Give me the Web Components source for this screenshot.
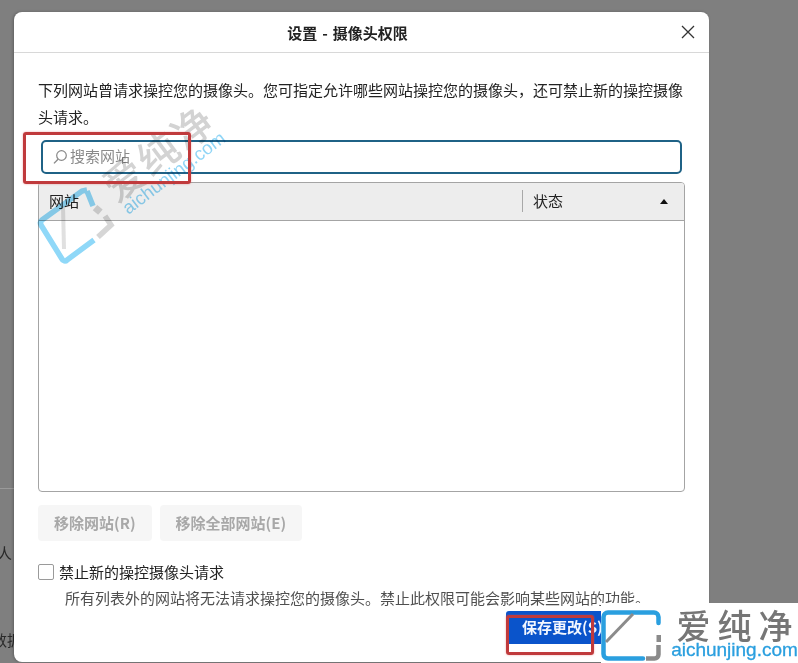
<!DOCTYPE html>
<html lang="zh-CN"><head><meta charset="utf-8"><title>设置 - 摄像头权限</title>
<style>
html,body{margin:0;padding:0}
body{width:798px;height:663px;overflow:hidden;background:#7f7f7f;font-family:"Noto Sans CJK SC","Noto Sans",sans-serif;font-size:15px;color:#222}
</style></head><body>
<x-page>
  <x-backdrop slot="side"></x-backdrop>
  <x-dialog heading="设置 - 摄像头权限">
    <x-intro>下列网站曾请求操控您的摄像头。您可指定允许哪些网站操控您的摄像头，还可禁止新的操控摄像头请求。</x-intro>
    <x-search>搜索网站</x-search>
    <x-table></x-table>
    <x-actions>
      <x-button>移除网站(R)</x-button>
      <x-button>移除全部网站(E)</x-button>
    </x-actions>
    <x-check note="所有列表外的网站将无法请求操控您的摄像头。禁止此权限可能会影响某些网站的功能。">禁止新的操控摄像头请求</x-check>
    <x-footer><x-button primary>保存更改(S)</x-button></x-footer>
  </x-dialog>
  <x-watermark slot="over"></x-watermark>
  <x-mark slot="over" style="left:23px;top:132px;width:168px;height:52px"></x-mark>
  <x-mark slot="over" style="left:506px;top:615px;width:88px;height:40px"></x-mark>
  <x-brand slot="over"></x-brand>
</x-page>
<script>
function def(name,css,html,init){
  customElements.define(name,class extends HTMLElement{
    constructor(){super();const r=this.attachShadow({mode:'open'});r.innerHTML='<style>'+css+'</style>'+html;}
    connectedCallback(){if(init)init(this,this.shadowRoot);}
  });
}
const logoPaths=`<path d="M57.5 13V7a4.5 4.5 0 0 0-4.5-4.5H7A4.5 4.5 0 0 0 2.500 7v37A4.500 4.500 0 0 0 7 48.500h35" fill="none" stroke="#2a9fdf" stroke-width="4.500" stroke-linecap="round"/>
<path d="M5 32 32 4" stroke="#8b8b8b" stroke-width="3" fill="none"/>
<rect x="55.500" y="25" width="4.500" height="7" fill="#8b8b8b"/>
<path d="M57.500 35v9.500a4 4 0 0 1-4 4H45" fill="none" stroke="#8b8b8b" stroke-width="4.500"/>`;
def('x-page',`:host{display:flex;position:relative;width:798px;height:663px;overflow:hidden}`,
  `<slot name="side"></slot><slot></slot><slot name="over"></slot>`);
def('x-backdrop',`:host{display:flex;flex-direction:column;flex:none;width:14px;overflow:hidden;color:#2a2a2a;font-size:15px;line-height:20px;box-sizing:border-box}
  .line{height:488px;flex:none;border-bottom:1px solid #9a9a9a}
  .ren{margin-top:54px;margin-left:-3px;white-space:nowrap}
  .data{margin-top:67px;margin-left:-8px;white-space:nowrap}`,
  `<div class="line"></div><div class="ren">人</div><div class="data">数据</div>`);
def('x-dialog',`:host{display:flex;flex-direction:column;flex:none;width:695px;height:650px;margin-top:12px;background:#fff;border-radius:8px;box-shadow:-1px 0 3px rgba(0,0,0,.25);box-sizing:border-box}
  header{display:flex;align-items:center;justify-content:center;height:40px;border-bottom:1px solid #d8d8d8;position:relative;font-weight:700;font-size:15px;color:#222;padding-right:28px}
  #t{word-spacing:1.500px}
  button{all:unset;position:absolute;right:14px;top:13px;width:14px;height:14px;display:flex}
  main{display:flex;flex-direction:column;padding:23px 24px 0}`,
  `<header><span id="t"></span><button aria-label="关闭"><svg width="14" height="14" viewBox="0 0 14 14"><path d="M1 1l12 12M13 1 1 13" stroke="#333" stroke-width="1.3" fill="none"/></svg></button></header><main><slot></slot></main>`,
  (h,r)=>{r.getElementById('t').textContent=h.getAttribute('heading')});
def('x-intro',`:host{display:block;line-height:27px;font-size:15px;color:#222}`,`<slot></slot>`);
def('x-search',`:host{display:flex;align-items:center;gap:2px;margin:10px 3px 0;height:34px;box-sizing:border-box;border:2px solid #1f6286;border-radius:5px;padding:0 0 3px 9px;color:#8a8a8a;font-size:15px}`,
  `<svg width="16" height="16" viewBox="0 0 16 16" style="margin-top:3px"><circle cx="9.500" cy="6.500" r="4.800" fill="none" stroke="#888" stroke-width="1.200"/><path d="M6 10.200 2 14.400" stroke="#888" stroke-width="1.300"/></svg><slot></slot>`);
def('x-table',`:host{display:block;margin-top:8px;height:310px;box-sizing:border-box;border:1px solid #a4a4a4;border-radius:4px;overflow:hidden}
  .head{display:grid;grid-template-columns:483px 1fr;height:38px;box-sizing:border-box;background:#ededed;border-bottom:1px solid #a4a4a4;align-items:center;font-size:15px;color:#222}
  .a{padding:0 0 3px 10px}
  .b{display:flex;align-items:center;justify-content:space-between;height:22px;border-left:1px solid #a8a8a8;padding:0 16px 0 10px;margin-top:-1px}
  .b span{padding-bottom:2px}
  .tri{width:0;height:0;border:4px solid transparent;border-top:0;border-bottom:5px solid #111}`,
  `<div class="head"><div class="a">网站</div><div class="b"><span>状态</span><i class="tri"></i></div></div>`);
def('x-actions',`:host{display:flex;gap:8px;margin-top:13px}`,`<slot></slot>`);
def('x-button',`:host{display:inline-flex;align-items:center;justify-content:center;height:36px;padding:0 16px 2px;box-sizing:border-box;border-radius:4px;background:#f6f6f6;color:#a8a8a8;font-weight:700;font-size:15px;white-space:nowrap;flex:none}
  :host([primary]){background:#0a54cb;color:#f2f7ff;height:33px;padding:0 16px 2px;border-radius:3px 3px 0 0}`,`<slot></slot>`);
def('x-check',`:host{display:grid;grid-template-columns:16px 1fr;column-gap:5px;margin-top:21px;font-size:15px;color:#222}
  .box{width:16px;height:16px;box-sizing:border-box;border:1px solid #9a9a9a;border-radius:2px;align-self:center;background:#fff}
  .l{line-height:20px}
  .n{grid-column:2;margin-top:6px;margin-left:6px;color:#4f4f4f;font-size:15px;line-height:20px;white-space:nowrap}`,
  `<div class="box"></div><div class="l"><slot></slot></div><div class="n" id="n"></div>`,
  (h,r)=>{r.getElementById('n').textContent=h.getAttribute('note')});
def('x-footer',`:host{display:flex;margin-top:3px;margin-left:468px}`,`<slot></slot>`);
def('x-mark',`:host{position:absolute;box-sizing:border-box;border:3px solid #c03a3c;border-radius:3px;box-shadow:0 0 2px rgba(225,90,90,.6);pointer-events:none}`,``);
def('x-watermark',`:host{position:absolute;inset:0;pointer-events:none;mix-blend-mode:multiply}
  svg{position:absolute;left:0;top:0}
  .zh,.en{position:absolute;white-space:nowrap;transform:translate(-50%,-50%) rotate(-37deg)}
  .zh{left:158px;top:151px;font-size:40px;font-weight:500;letter-spacing:3px;color:rgba(120,120,120,.33);line-height:44px}
  .en{left:174px;top:173px;font-family:"Liberation Sans",sans-serif;font-size:18.500px;color:rgba(70,185,240,.6);line-height:20px}`,
  `<svg width="240" height="280" viewBox="0 0 240 280" fill="none">
    <path d="M87 190 82 191 42 220a4 4 0 0 0-1 5L62 259a3 3 0 0 0 5 1L94 240" stroke="#8fd8f8" stroke-width="5.500"/>
    <path d="M87 191 93 206" stroke="#8fd8f8" stroke-width="5.500"/>
    <path d="M63 206 64 249" stroke="#999" stroke-opacity=".3" stroke-width="4"/>
    <rect x="94" y="206" width="7" height="7" transform="rotate(40 97 210)" fill="#999" fill-opacity=".4"/>
    <path d="M105 216 111 225 98 237" stroke="#999" stroke-opacity=".4" stroke-width="5.500"/>
  </svg><div class="zh">爱纯净</div><div class="en">aichunjing.com</div>`);
def('x-brand',`:host{position:absolute;right:0;bottom:0;width:197px;height:60px;background:#fff;display:flex;align-items:flex-start;padding-top:7px;box-sizing:border-box}
  svg{flex:none;width:60px;height:51px}
  .t{display:flex;flex-direction:column;margin-left:11px;align-items:center;width:125px}
  .zh{font-size:34px;font-weight:500;letter-spacing:7px;line-height:30px;color:#767676;margin-left:7px;white-space:nowrap}
  .en{font-family:"Liberation Sans",sans-serif;font-size:19px;line-height:18px;margin-top:1px;color:#2a9fdf;-webkit-text-stroke:.3px #2a9fdf;white-space:nowrap}`,
  `<svg viewBox="0 0 60 51">${logoPaths}</svg><div class="t"><div class="zh">爱纯净</div><div class="en">aichunjing.com</div></div>`);
</script>
</body></html>
